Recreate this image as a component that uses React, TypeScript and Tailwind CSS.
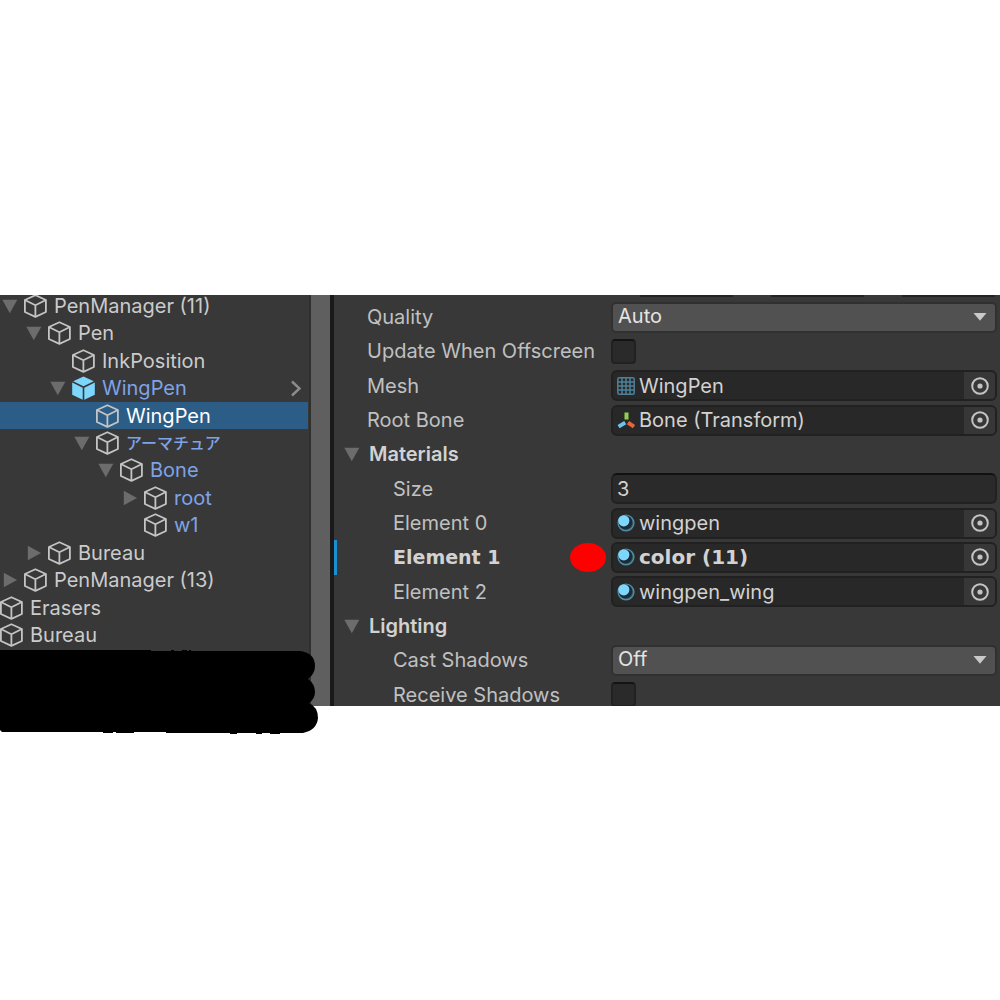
import type { ReactNode } from "react";
import { clsx } from "clsx";

type TreeItem = {
  name: string;
  level: number;
  arrow?: "open" | "closed";
  kind?: "prefab" | "prefabChild";
  selected?: boolean;
};

const tree: TreeItem[] = [
  { name: "PenManager (11)", level: 1, arrow: "open" },
  { name: "Pen", level: 2, arrow: "open" },
  { name: "InkPosition", level: 3 },
  { name: "WingPen", level: 3, arrow: "open", kind: "prefab" },
  { name: "WingPen", level: 4, selected: true },
  { name: "アーマチュア", level: 4, arrow: "open", kind: "prefabChild" },
  { name: "Bone", level: 5, arrow: "open", kind: "prefabChild" },
  { name: "root", level: 6, arrow: "closed", kind: "prefabChild" },
  { name: "w1", level: 6, kind: "prefabChild" },
  { name: "Bureau", level: 2, arrow: "closed" },
  { name: "PenManager (13)", level: 1, arrow: "closed" },
  { name: "Erasers", level: 0 },
  { name: "Bureau", level: 0 },
];

const indent = ["pl-0", "pl-0", "pl-6", "pl-12", "pl-18", "pl-24", "pl-30"];

function Triangle({ open }: { open: boolean }) {
  return (
    <svg viewBox="0 0 16 16" className="size-4 shrink-0" fill="#6c6c6c" aria-hidden>
      <path d={open ? "M0.3 1.8H15.3L7.8 15.2Z" : "M1.8 0.8L15 8L1.8 15.2Z"} />
    </svg>
  );
}

function Cube({ filled }: { filled?: boolean }) {
  if (filled) {
    return (
      <svg viewBox="0 0 24 24" className="size-6 shrink-0" fill="#7fd6fd" aria-hidden>
        <path d="M12.5 0.4L22.8 5.2L12.5 10.2L2.2 5.2Z" />
        <path d="M1.2 6.6L11.7 11.8V23.8L1.2 18.8Z" />
        <path d="M23.8 6.6L13.3 11.8V23.8L23.8 18.8Z" />
      </svg>
    );
  }
  return (
    <svg viewBox="0 0 24 24" className="size-6 shrink-0" fill="none" stroke="#c4c4c4" strokeWidth="1.8" strokeLinejoin="round" aria-hidden>
      <path d="M12.4 1.2L22.9 6V18L12.4 22.9L1.9 18V6Z" />
      <path d="M1.9 6L12.4 11.2L22.9 6M12.4 11.2V22.9" />
    </svg>
  );
}

function MeshIcon() {
  return (
    <svg viewBox="0 0 20 20" className="size-5 shrink-0" fill="none" stroke="#4d8199" strokeWidth="1.5" aria-hidden>
      <rect x="1.8" y="1.8" width="16.4" height="16.4" rx="1.5" />
      <path d="M6 2V18M10 2V18M14 2V18M2 6H18M2 10H18M2 14H18" />
    </svg>
  );
}

function TransformIcon() {
  return (
    <svg viewBox="0 0 20 20" className="size-5 shrink-0" fill="none" strokeWidth="4" aria-hidden>
      <path d="M10.5 2.5V9.5" stroke="#8fd14f" />
      <path d="M9.2 12.6L2.6 16.6" stroke="#6cc4ee" />
      <path d="M12 12.6L18 16.6" stroke="#e8653c" />
    </svg>
  );
}

function MaterialIcon() {
  return (
    <svg viewBox="0 0 20 20" className="size-5 shrink-0" aria-hidden>
      <circle cx="10" cy="10" r="7.8" fill="#2b4d5c" stroke="#4f8ba3" strokeWidth="1.6" />
      <circle cx="9.4" cy="9.4" r="6.8" fill="#1c2b33" />
      <circle cx="7.8" cy="7.8" r="5.6" fill="#7fd6fd" />
    </svg>
  );
}

function Hierarchy() {
  return (
    <ul className="-mt-[3px] grid h-[357px] auto-rows-fr pr-px" aria-label="Hierarchy">
      {tree.map(({ name, level, arrow, kind, selected }, i) => (
        <li
          key={i}
          className={clsx(
            "-ml-px flex min-h-0 items-center",
            indent[level],
            selected ? "bg-[#2c5d87] text-white" : kind ? "text-[#7ea3e6]" : "text-[#cbcbcb]",
          )}
        >
          {level > 0 && (
            <span className="flex w-6 shrink-0 pl-[3px]">
              {arrow && (
                <button type="button" aria-label={`Toggle ${name}`}>
                  <Triangle open={arrow === "open"} />
                </button>
              )}
            </span>
          )}
          <button type="button" className="flex items-center gap-[7px] whitespace-nowrap">
            <Cube filled={kind === "prefab"} />
            <span className={name === "アーマチュア" ? "text-base font-medium" : undefined}>{name}</span>
          </button>
          {kind === "prefab" && (
            <button type="button" className="mr-[5px] ml-auto" aria-label="Open prefab">
              <svg viewBox="0 0 14 18" className="h-[18px] w-[14px]" fill="none" stroke="#8c8c8c" strokeWidth="2.4" aria-hidden>
                <path d="M3 2.5L10.5 9.5L3 16.5" />
              </svg>
            </button>
          )}
        </li>
      ))}
    </ul>
  );
}

type RowProps = {
  label: string;
  id: string;
  nested?: boolean;
  modified?: boolean;
  children: ReactNode;
};

function Row({ label, id, nested, modified, children }: RowProps) {
  return (
    <div
      className={clsx(
        "flex min-h-0 items-center border-l-[3px] pr-[3px]",
        modified ? "border-[#1b8fd2] font-['DejaVu_Sans'] font-bold" : "border-transparent",
      )}
    >
      <div className={clsx("flex w-[274px] shrink-0 items-center", nested ? "pl-14" : "pl-[30px]")}>
        <label htmlFor={id} className={clsx("whitespace-nowrap", modified && "text-[19px] text-[#d2d2d2]")}>
          {label}
        </label>
        {modified && <span className="mr-[5px] ml-auto h-[29px] w-9 rounded-[50%] bg-[#ff0000]" />}
      </div>
      {children}
    </div>
  );
}

function Foldout({ title }: { title: string }) {
  return (
    <button type="button" className="flex min-h-0 items-center gap-[9px] pl-[10px] text-left font-semibold text-[#d2d2d2]">
      <Triangle open />
      {title}
    </button>
  );
}

function ObjectField({ id, icon, value }: { id: string; icon: ReactNode; value: string }) {
  return (
    <div className="flex h-[31px] min-w-0 flex-1 items-center rounded-md border-2 border-[#212121] bg-[#282828] pl-[3px] text-[#d2d2d2]">
      {icon}
      <input id={id} readOnly defaultValue={value} className="ml-[3px] min-w-0 flex-1 bg-transparent outline-none" />
      <button type="button" className="flex h-full w-[31px] items-center justify-center rounded-r-sm bg-[#373737]" aria-label={`Select ${value}`}>
        <svg viewBox="0 0 20 20" className="size-5" fill="none" stroke="#c4c4c4" strokeWidth="2" aria-hidden>
          <circle cx="10" cy="10" r="7.8" />
          <circle cx="10" cy="10" r="2.6" fill="#c4c4c4" stroke="none" />
        </svg>
      </button>
    </div>
  );
}

function Dropdown({ id, value }: { id: string; value: string }) {
  return (
    <div className="relative min-w-0 flex-1">
      <select
        id={id}
        className="block h-[31px] w-full appearance-none rounded-[5px] border-2 border-[#303030] bg-[#515151] pb-[2px] pl-[5px] text-[#e4e4e4] outline-none"
      >
        <option>{value}</option>
      </select>
      <svg viewBox="0 0 14 8" className="pointer-events-none absolute top-[11px] right-[10px] h-2 w-[14px]" fill="#c9c9c9" aria-hidden>
        <path d="M0.5 0H13.5L7 7.8Z" />
      </svg>
    </div>
  );
}

function Checkbox({ id }: { id: string }) {
  return <input id={id} type="checkbox" className="size-[25px] appearance-none rounded-[4px] border-2 border-[#212121] border-t-[#141414] bg-[#2a2a2a]" />;
}

function Inspector() {
  return (
    <div className="min-w-0 flex-1 text-[#c0c0c0]">
      <div className="flex h-[5px] items-start gap-[38px] pr-[5px] pl-[306px]">
        <span className="h-[2px] flex-1 bg-[#232323]" />
        <span className="h-[2px] flex-1 bg-[#232323]" />
        <span className="h-[2px] flex-1 bg-[#232323]" />
      </div>
      <div className="grid h-[412px] auto-rows-fr">
        <Row label="Quality" id="quality">
          <Dropdown id="quality" value="Auto" />
        </Row>
        <Row label="Update When Offscreen" id="offscreen">
          <Checkbox id="offscreen" />
        </Row>
        <Row label="Mesh" id="mesh">
          <ObjectField id="mesh" icon={<MeshIcon />} value="WingPen" />
        </Row>
        <Row label="Root Bone" id="root-bone">
          <ObjectField id="root-bone" icon={<TransformIcon />} value="Bone (Transform)" />
        </Row>
        <Foldout title="Materials" />
        <Row label="Size" id="size" nested>
          <input
            id="size"
            defaultValue="3"
            className="h-[31px] min-w-0 flex-1 rounded-md border-2 border-[#212121] border-t-[#111111] bg-[#2a2a2a] pl-1 text-[#d2d2d2] outline-none"
          />
        </Row>
        <Row label="Element 0" id="element-0" nested>
          <ObjectField id="element-0" icon={<MaterialIcon />} value="wingpen" />
        </Row>
        <Row label="Element 1" id="element-1" nested modified>
          <ObjectField id="element-1" icon={<MaterialIcon />} value="color (11)" />
        </Row>
        <Row label="Element 2" id="element-2" nested>
          <ObjectField id="element-2" icon={<MaterialIcon />} value="wingpen_wing" />
        </Row>
        <Foldout title="Lighting" />
        <Row label="Cast Shadows" id="cast-shadows" nested>
          <Dropdown id="cast-shadows" value="Off" />
        </Row>
        <Row label="Receive Shadows" id="receive-shadows" nested>
          <Checkbox id="receive-shadows" />
        </Row>
      </div>
    </div>
  );
}

export default function App() {
  return (
    <main className="min-h-screen bg-white pt-[295px] font-['Inter','Noto_Sans_CJK_JP',sans-serif] text-[20px] leading-6">
      <div className="relative">
        <div className="flex h-[411px] overflow-hidden bg-[#383838]">
          <div className="w-[309px] shrink-0">
            <Hierarchy />
          </div>
          <div className="w-[21px] shrink-0 border-l-2 border-[#303030] bg-[#5f5f5f]" />
          <div className="w-1 shrink-0 bg-[#191919]" />
          <Inspector />
        </div>
        {/* marker strokes over the bottom of the hierarchy */}
        <svg viewBox="0 0 320 86" className="absolute top-[354px] left-0 h-[86px] w-[320px]" aria-hidden>
          <path d="M0 1H151V2H171V1H174V2H182V1H187V2H189V1H191V2H300Q315 4 315 17Q315 25 308 30Q315 35 315 43Q315 50 309 54Q318 58 318 69Q317 81 303 84H280V85H270V84H262V85H256V84H237V85H230V84H166V83H134V84H116V83H113V84H103V83H2L0 81Z" />
        </svg>
      </div>
    </main>
  );
}
